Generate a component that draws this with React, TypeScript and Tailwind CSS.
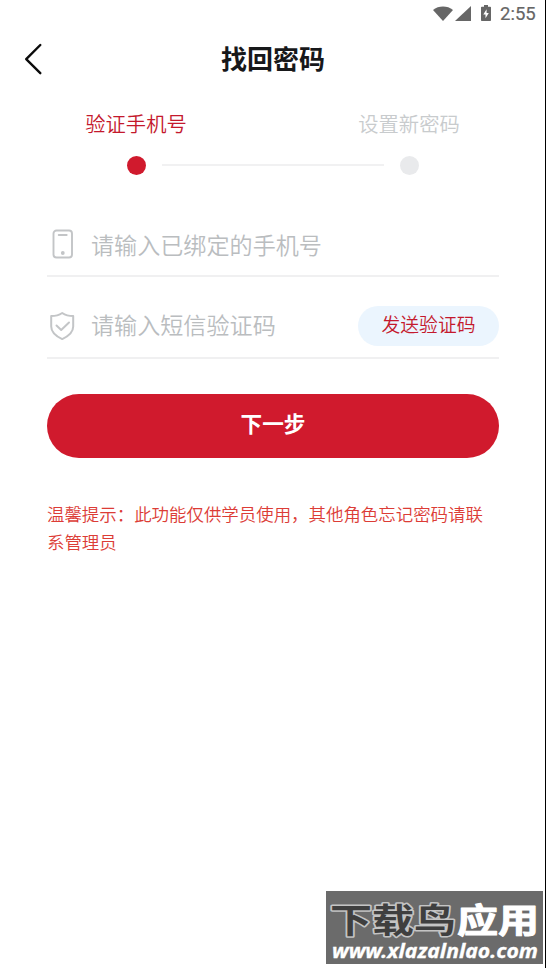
import React, { useState } from 'react'

function StatusBar() {
  return (
    <div className="flex h-[28px] items-center justify-end pr-[8px] text-[#666666]">
      <svg className="mb-px h-[15px] w-[20px]" viewBox="0 0 20 16" preserveAspectRatio="none" fill="currentColor">
        <path d="M0 4.2C5.6-.6 14.4-.6 20 4.2L10 16z" />
      </svg>
      <svg className="mb-px ml-[2px] h-[15px] w-[16px]" viewBox="0 0 16 16" preserveAspectRatio="none" fill="currentColor">
        <path d="M16 0v16H0z" />
      </svg>
      <svg className="mb-[2px] ml-[10px] h-[16px] w-[10px]" viewBox="0 0 10 17" preserveAspectRatio="none" fill="currentColor">
        <path d="M3 0h4v1.8h2.2q.8 0 .8.8v13.6q0 .8-.8.8H.8q-.8 0-.8-.8V2.6q0-.8.8-.8H3z" />
        <path fill="#fff" d="M5.6 4.5 2.3 10.2h2.2v4L7.8 8.500H5.600z" />
      </svg>
      <span className="ml-[9px] w-[37px] whitespace-nowrap font-['Roboto',sans-serif] text-[18.5px] leading-[28px] [-webkit-text-stroke:0.2px]">
        2:55
      </span>
    </div>
  )
}

function Header() {
  return (
    <header className="grid h-[62px] grid-cols-[80px_1fr_80px] items-center">
      <button type="button" aria-label="返回" className="pl-[24px]">
        <svg
          className="h-[32px] w-[18px]"
          viewBox="0 0 18 32"
          fill="none"
          stroke="#0b0b0b"
          strokeWidth="2.4"
          strokeLinecap="round"
          strokeLinejoin="round"
        >
          <path d="M16.3 2 2.2 16.2 16.3 30.2" />
        </svg>
      </button>
      <h1 className="pb-[3px] pl-px text-center text-[26px] font-bold leading-[38px] text-[#17181a]">找回密码</h1>
    </header>
  )
}

function Steps() {
  return (
    <div className="px-[46px] pt-[19px]">
      <div className="flex justify-between text-[20.3px] font-[350] leading-[28px]">
        <span className="w-[180px] text-center text-[#c4192d]">验证手机号</span>
        <span className="w-[180px] text-center text-[#c8cbcd]">设置新密码</span>
      </div>
      <div className="mt-[19px] flex items-center justify-center">
        <span className="size-[19px] rounded-full bg-[#d01a2d]" />
        <span className="mx-[16px] mb-px h-[2px] w-[222px] bg-[#f1f1f2]" />
        <span className="size-[19px] rounded-full bg-[#e9eaec]" />
      </div>
    </div>
  )
}

function PhoneIcon() {
  return (
    <svg className="h-[30px] w-[32px]" viewBox="0 0 32 30" fill="none" stroke="#c3c5c7" strokeWidth="1.9">
      <rect x="6.5" y="1.5" width="18.5" height="27" rx="3" />
      <path d="M11.7 6h8" strokeLinecap="round" />
      <circle cx="15.8" cy="24" r="1.9" fill="#c3c5c7" stroke="none" />
    </svg>
  )
}

function ShieldIcon() {
  return (
    <svg
      className="h-[30px] w-[32px]"
      viewBox="0 0 32 30"
      fill="none"
      stroke="#c3c5c7"
      strokeWidth="2"
      strokeLinecap="round"
      strokeLinejoin="round"
    >
      <path d="M15.2 2C12.200 4 7.700 5 4.200 5v10.500c0 6 5 9.800 11 12.600 6-2.800 11-6.600 11-12.600V5c-3.500 0-8-1-11-3z" />
      <path d="m9.500 14.500 4.700 4.500 7.800-7.500" />
    </svg>
  )
}

export default function App() {
  const [phone, setPhone] = useState('')
  const [code, setCode] = useState('')

  return (
    <div className="relative h-[968px] w-[546px] overflow-hidden border-r border-black bg-white font-['Noto_Sans_CJK_SC',sans-serif]">
      <StatusBar />
      <Header />
      <Steps />
      <main className="pl-[47px] pr-[46px] pt-[30px]">
        <div className="flex h-[72px] items-center border-b-2 border-[#f0f0f1] pt-[8px]">
          <PhoneIcon />
          <input
            className="ml-[12px] h-[40px] flex-1 text-[23.1px] font-[350] text-[#333333] outline-none placeholder:text-[#babdbf]"
            placeholder="请输入已绑定的手机号"
            value={phone}
            onChange={(e) => setPhone(e.target.value)}
          />
        </div>
        <div className="flex h-[82px] items-center border-b-2 border-[#f0f0f1] pt-[18px]">
          <ShieldIcon />
          <input
            className="ml-[12px] h-[40px] w-[240px] pb-[4px] text-[23.1px] font-[350] text-[#333333] outline-none placeholder:text-[#babdbf]"
            placeholder="请输入短信验证码"
            value={code}
            onChange={(e) => setCode(e.target.value)}
          />
          <button
            type="button"
            className="ml-auto h-[40px] w-[141px] rounded-full bg-[#ebf5fe] pb-[5px] text-[18.8px] font-[350] leading-[28px] text-[#c4192d]"
          >
            发送验证码
          </button>
        </div>
        <button
          type="button"
          className="mt-[35px] h-[64px] w-full rounded-full bg-[#d01a2d] pb-[5px] text-[21.6px] font-bold text-white"
        >
          下一步
        </button>
        <p className="mt-[42px] text-[17.45px] font-[350] leading-[28px] text-[#dc3c36]">
          温馨提示：此功能仅供学员使用，其他角色忘记密码请联系管理员
        </p>
      </main>
      <div className="absolute left-[326px] top-[891px] h-[73px] w-[217px] bg-[#6b6b6b]">
        <svg className="size-full" viewBox="0 0 217 73">
          <g
            fontFamily="'Noto Sans CJK SC', sans-serif"
            fontSize="34"
            fontWeight="700"
            strokeWidth="3"
            strokeLinejoin="round"
            paintOrder="stroke"
          >
            <text x="4" y="42" textLength="126" lengthAdjust="spacingAndGlyphs" fill="#3f3f3f" stroke="#c4c4c4">
              下载鸟
            </text>
            <text x="131" y="42" textLength="82" lengthAdjust="spacingAndGlyphs" fill="#ffffff" stroke="#ffffff" strokeWidth="1">
              应用
            </text>
          </g>
          <text
            x="6"
            y="67"
            textLength="206"
            lengthAdjust="spacingAndGlyphs"
            fontFamily="'Noto Sans', sans-serif"
            fontSize="19"
            fontWeight="700"
            fontStyle="italic"
            fill="#ffffff"
            stroke="#ffffff"
            strokeWidth="0.3"
          >
            www.xlazalnlao.com
          </text>
        </svg>
      </div>
    </div>
  )
}
